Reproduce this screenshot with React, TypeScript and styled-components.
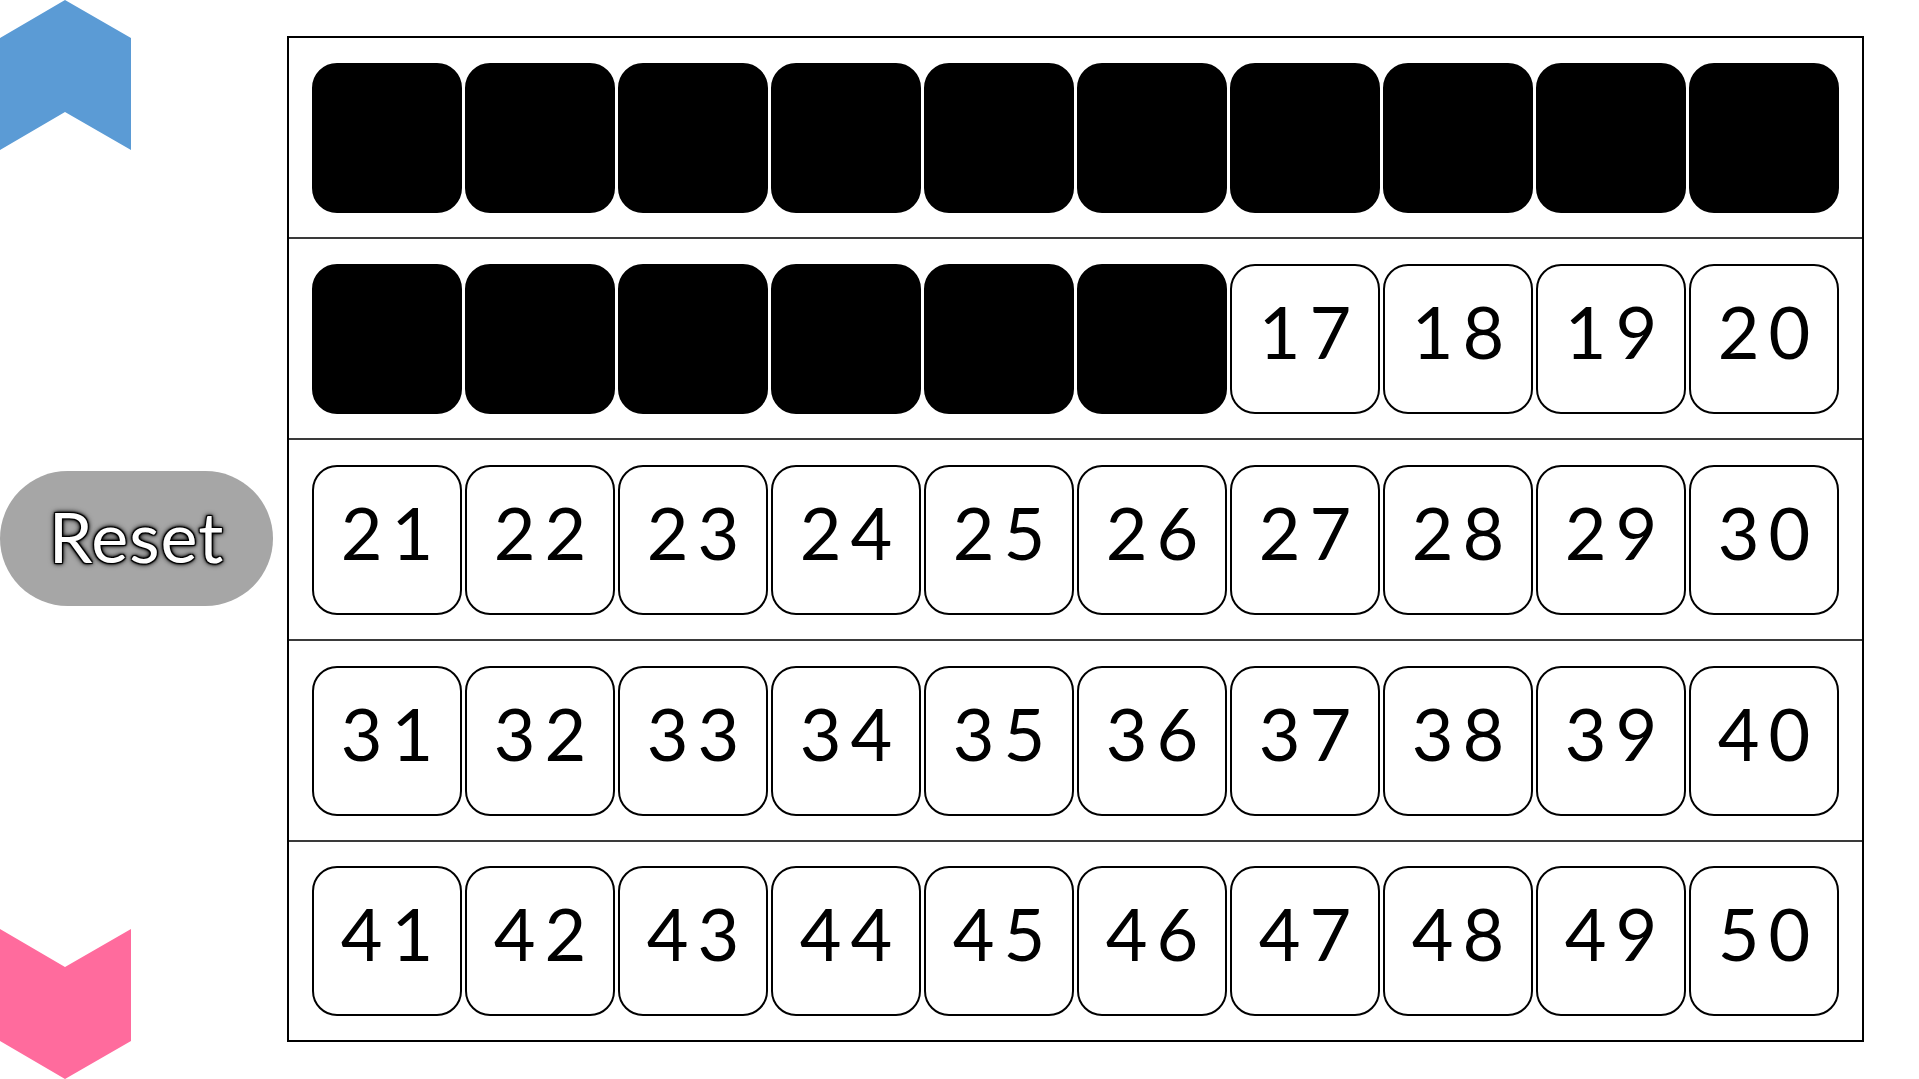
import React from 'react';
import styled, { createGlobalStyle } from 'styled-components';

const GlobalStyle = createGlobalStyle`
  html, body {
    margin: 0;
    padding: 0;
    background: #ffffff;
    overflow: hidden;
  }
  body {
    font-family: Lato, "Noto Sans", sans-serif;
  }
`;

const Page = styled.div`
  width: 100vw;
  height: 100vh;
  display: flex;
`;

const Sidebar = styled.div`
  width: 287px;
  height: 100%;
  display: flex;
  flex-direction: column;
  justify-content: space-between;
  align-items: flex-start;
`;

const Chevron = styled.svg`
  display: block;
  width: 131px;
  height: 150px;
`;

const ResetButton = styled.button`
  width: 273px;
  height: 135px;
  margin-top: -2px;
  border: none;
  border-radius: 68px;
  background-color: #a6a6a6;
  color: #ffffff;
  font-family: Lato, "Noto Sans", sans-serif;
  font-size: 70px;
  font-weight: 400;
  letter-spacing: 1px;
  padding: 0 0 6px 0;
  text-shadow:
    1px 1px 1px #000, -1px -1px 1px #000, 1px -1px 1px #000, -1px 1px 1px #000,
    0 0 3px #000, 0 0 4px #000, 0 0 6px #000;
  cursor: pointer;
`;

const Main = styled.div`
  flex: 1;
  padding-top: 36px;
`;

const Board = styled.div`
  width: 1573px;
  border: 2px solid #000000;
  display: flex;
  flex-direction: column;
`;

const Row = styled.div`
  height: 199px;
  padding: 0 23px;
  display: flex;
  align-items: center;
  gap: 3px;
  border-bottom: 2px solid #3a3a3a;

  &:last-child {
    height: 198px;
    border-bottom: none;
  }
`;

const Cell = styled.div<{ filled: boolean }>`
  box-sizing: border-box;
  width: 150px;
  height: 150px;
  border-radius: 25px;
  border: 2px solid #000000;
  background-color: ${({ filled }) => (filled ? '#000000' : '#ffffff')};
  color: #000000;
  font-family: Lato, "Noto Sans", sans-serif;
  font-size: 72px;
  font-weight: 400;
  letter-spacing: 9px;
  padding-left: 9px;
  padding-bottom: 16px;
  display: flex;
  align-items: center;
  justify-content: center;
`;

const FILLED_COUNT = 16;

const rows = Array.from({ length: 5 }, (_, r) =>
  Array.from({ length: 10 }, (_, c) => r * 10 + c + 1)
);

const App = () => {
  return (
    <Page>
      <GlobalStyle />
      <Sidebar>
        <Chevron viewBox="0 0 131 150">
          <polygon points="0,38 65,0 131,38 131,150 65,112 0,150" fill="#5b9bd5" />
        </Chevron>
        <ResetButton>Reset</ResetButton>
        <Chevron viewBox="0 0 131 150">
          <polygon points="0,0 65,38 131,0 131,112 65,150 0,112" fill="#ff6b9d" />
        </Chevron>
      </Sidebar>
      <Main>
        <Board>
          {rows.map((row, i) => (
            <Row key={i}>
              {row.map(n => (
                <Cell key={n} filled={n <= FILLED_COUNT}>
                  {n > FILLED_COUNT ? n : null}
                </Cell>
              ))}
            </Row>
          ))}
        </Board>
      </Main>
    </Page>
  );
};

export default App;
